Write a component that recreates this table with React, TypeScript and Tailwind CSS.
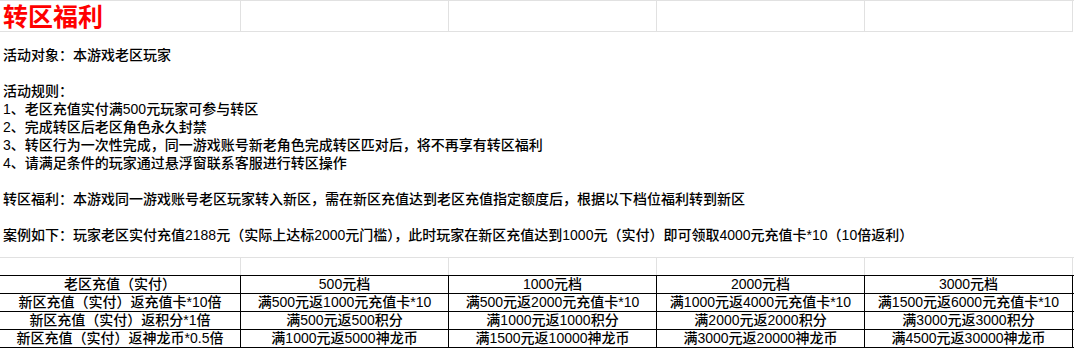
const rules = [
  '活动对象：本游戏老区玩家',
  '',
  '活动规则：',
  '1、老区充值实付满500元玩家可参与转区',
  '2、完成转区后老区角色永久封禁',
  '3、转区行为一次性完成，同一游戏账号新老角色完成转区匹对后，将不再享有转区福利',
  '4、请满足条件的玩家通过悬浮窗联系客服进行转区操作',
  '',
  '转区福利：本游戏同一游戏账号老区玩家转入新区，需在新区充值达到老区充值指定额度后，根据以下档位福利转到新区',
  '',
  '案例如下：玩家老区实付充值2188元（实际上达标2000元门槛），此时玩家在新区充值达到1000元（实付）即可领取4000元充值卡*10（10倍返利）',
];

const table = [
  ['老区充值（实付）', '500元档', '1000元档', '2000元档', '3000元档'],
  ['新区充值（实付）返充值卡*10倍', '满500元返1000元充值卡*10', '满500元返2000元充值卡*10', '满1000元返4000元充值卡*10', '满1500元返6000元充值卡*10'],
  ['新区充值（实付）返积分*1倍', '满500元返500积分', '满1000元返1000积分', '满2000元返2000积分', '满3000元返3000积分'],
  ['新区充值（实付）返神龙币*0.5倍', '满1000元返5000神龙币', '满1500元返10000神龙币', '满3000元返20000神龙币', '满4500元返30000神龙币'],
];

const cols = 'grid grid-cols-[241px_208px_208px_208px_208px]';

export default function App() {
  return (
    <div className="w-[1074px] h-[349px] bg-white text-black overflow-hidden font-medium font-['Liberation_Sans','Noto_Sans_CJK_SC',sans-serif]">
      {/* title row */}
      <div className={`${cols} border-t border-[#e1e1e1]`}>
        <div className="h-[31px] border-r border-b border-[#e1e1e1] flex items-center pl-[3px] pt-[2px] text-[25px] leading-[25px] font-bold text-[#ff0000] whitespace-nowrap">
          转区福利
        </div>
        {[0, 1, 2, 3].map((i) => (
          <div key={i} className="h-[31px] border-r border-b border-[#e1e1e1]" />
        ))}
      </div>

      {/* merged description cell */}
      <div className="h-[226px] border-b border-[#e1e1e1] flex flex-col justify-center pl-[3px] text-[14px] leading-[18px]">
        {rules.map((line, i) => (
          <div key={i} className="h-[18px] whitespace-nowrap">
            {line}
          </div>
        ))}
      </div>

      {/* empty row */}
      <div className={`${cols} border-b border-black`}>
        {[0, 1, 2, 3, 4].map((i) => (
          <div key={i} className="h-[17px] border-r border-[#e1e1e1]" />
        ))}
      </div>

      {/* tier table */}
      {table.map((row, r) => (
        <div key={r} className={`${cols} border-b border-black`}>
          {row.map((cell, c) => (
            <div
              key={c}
              className="h-[17px] border-r border-black flex items-center justify-center text-[14px] leading-[17px] whitespace-nowrap"
            >
              {cell}
            </div>
          ))}
        </div>
      ))}
    </div>
  );
}
